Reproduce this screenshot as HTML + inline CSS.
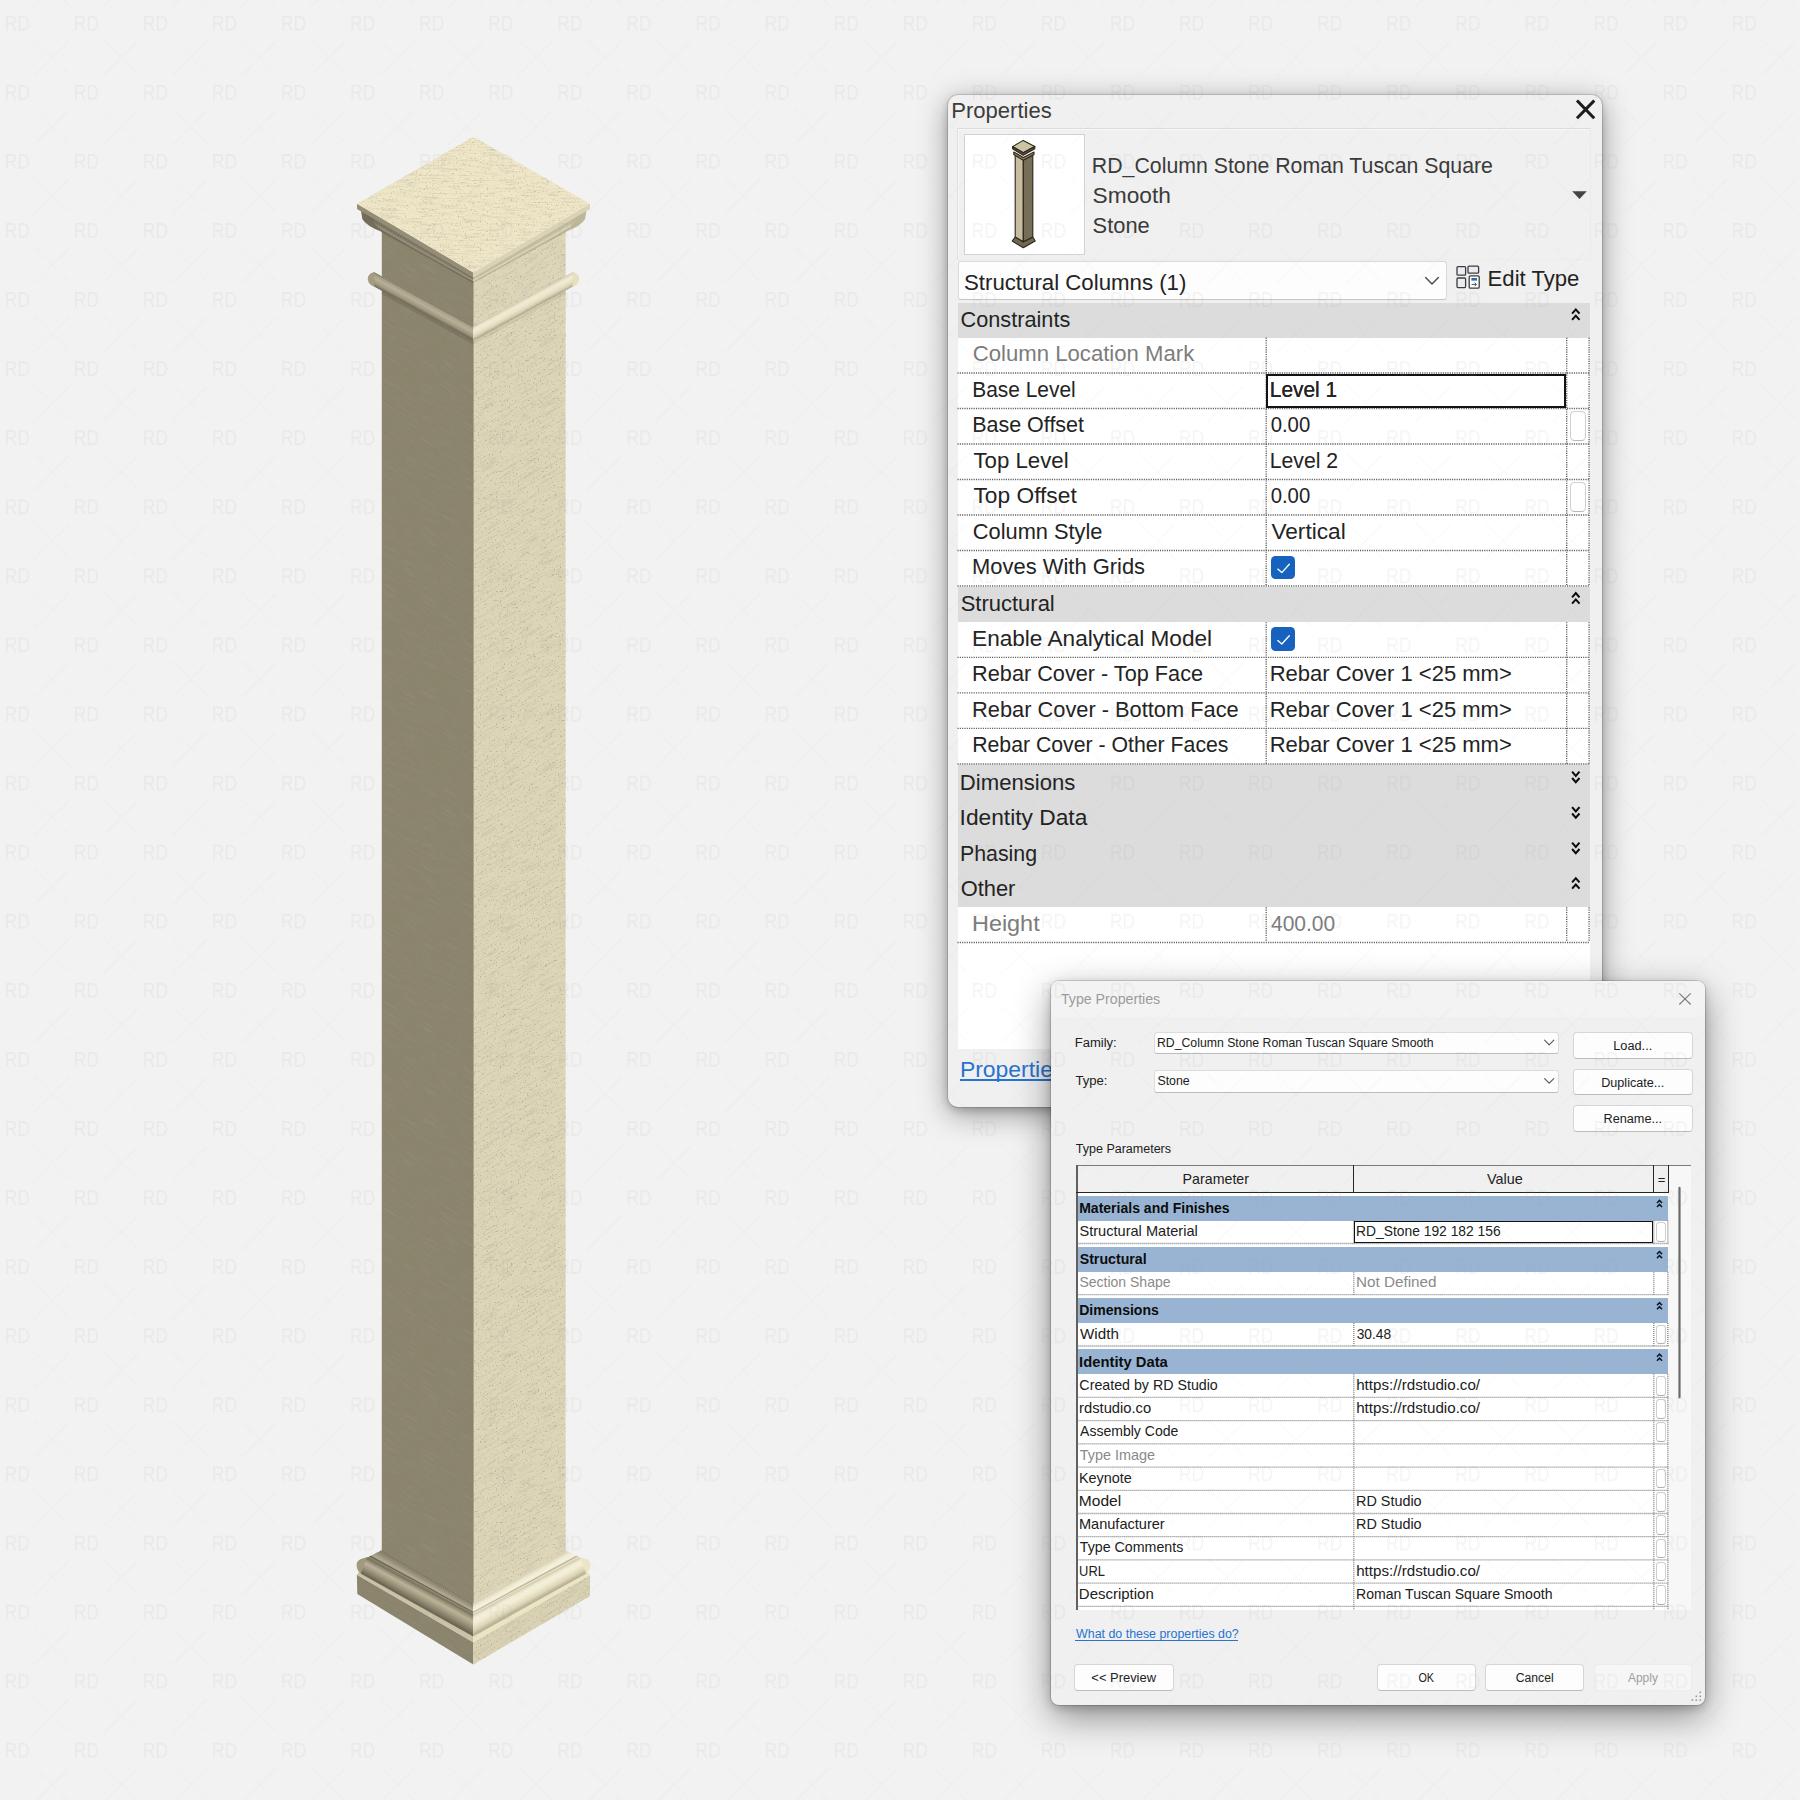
<!DOCTYPE html>
<html lang="en"><head><meta charset="utf-8"><title>RD_Column Stone Roman Tuscan Square Smooth</title>
<style>
html,body{margin:0;padding:0}
body{width:1800px;height:1800px;position:relative;overflow:hidden;background:#f2f2f2;font-family:"Liberation Sans",sans-serif;color:#1b1b1b}
.t{position:absolute;white-space:nowrap;line-height:1;transform-origin:0 0;display:block}
.abs{position:absolute}
svg{position:absolute;left:0;top:0;overflow:visible}
a.t{text-decoration:underline}

</style></head>
<body>
<svg width="1800" height="1800" viewBox="0 0 1800 1800" style="z-index:1">
<defs>
<filter id="grain" x="0" y="0" width="100%" height="100%"><feTurbulence type="fractalNoise" baseFrequency="0.05 0.6" numOctaves="3" seed="7" result="n"/><feColorMatrix in="n" type="matrix" values="0 0 0 0 0.40  0 0 0 0 0.37  0 0 0 0 0.29  0 0 0 -2.4 1.25"/></filter>
<filter id="spk" x="0" y="0" width="100%" height="100%"><feTurbulence type="fractalNoise" baseFrequency="0.55" numOctaves="2" seed="11" result="n"/><feColorMatrix in="n" type="matrix" values="0 0 0 0 0.3  0 0 0 0 0.26  0 0 0 0 0.17  0 0 0 -7 2.6"/></filter>
<clipPath id="cTop"><polygon points="473.3,136.7 590.0,203.8 473.3,272.4 357.0,203.8"/></clipPath>
<clipPath id="cRight"><polygon points="565.6,231.0 473.3,281.5 473.3,327.0 565.6,276.5"/><polygon points="565.6,288.0 473.3,338.0 473.3,1603.0 565.6,1550.7"/><polygon points="590.0,1575.1 473.3,1642.2 473.3,1664.5 590.0,1596.0"/></clipPath>
<clipPath id="cLeft"><polygon points="381.8,231.0 473.3,281.5 473.3,327.0 381.8,276.5"/><polygon points="381.8,288.0 473.3,338.0 473.3,1603.0 381.8,1550.5"/><polygon points="356.9,1574.7 473.3,1642.2 473.3,1664.5 357.3,1594.0"/></clipPath>
</defs>
<polygon points="356.9,1574.7 473.3,1642.2 473.3,1664.5 357.3,1594.0" fill="#8b846d"/>
<polygon points="590.0,1575.1 473.3,1642.2 473.3,1664.5 590.0,1596.0" fill="#dad2b4"/>
<polygon points="356.9,1574.7 473.3,1642.2 473.3,1635.5 360.0,1571.0" fill="#c9c2a5"/>
<polygon points="590.0,1575.1 473.3,1642.2 473.3,1635.5 587.0,1571.0" fill="#ece5c4"/>
<path d="M367.5,1557.6 Q355.6,1558.6 356.7,1566.2 Q357.5,1572.4 362,1574 L372,1574 L378,1560 Z" fill="#a09980"/>
<path d="M579.5,1557.6 Q591.4,1558.6 590.3,1566.2 Q589.5,1572.4 585,1574 L575,1574 L569,1560 Z" fill="#ebe4c5"/>
<polygon points="366.8,1557.3 473.3,1614.3 473.3,1617.3 366.0,1559.5" fill="#7c7661"/><polygon points="366.2,1558.9 473.3,1616.4 473.3,1619.4 365.4,1561.1" fill="#958e76"/><polygon points="365.7,1560.4 473.3,1618.5 473.3,1621.5 364.9,1562.7" fill="#a8a088"/><polygon points="365.1,1562.0 473.3,1620.7 473.3,1623.6 364.3,1564.2" fill="#bab399"/><polygon points="364.5,1563.6 473.3,1622.8 473.3,1625.8 363.7,1565.8" fill="#b0a98f"/><polygon points="364.0,1565.2 473.3,1624.9 473.3,1627.9 363.2,1567.4" fill="#a59e85"/><polygon points="363.4,1566.8 473.3,1627.1 473.3,1630.0 362.6,1569.0" fill="#99937a"/><polygon points="362.8,1568.3 473.3,1629.2 473.3,1632.2 362.0,1570.6" fill="#8c866f"/><polygon points="362.3,1569.9 473.3,1631.3 473.3,1634.3 361.5,1572.1" fill="#7f7964"/><polygon points="361.7,1571.5 473.3,1633.4 473.3,1636.4 360.9,1573.7" fill="#6e6857"/>
<polygon points="580.2,1557.3 473.3,1614.3 473.3,1617.3 581.0,1559.5" fill="#dbd4b9"/><polygon points="580.8,1558.9 473.3,1616.4 473.3,1619.4 581.6,1561.1" fill="#ece7d0"/><polygon points="581.3,1560.4 473.3,1618.5 473.3,1621.5 582.1,1562.7" fill="#f3efda"/><polygon points="581.9,1562.0 473.3,1620.7 473.3,1623.6 582.7,1564.2" fill="#f2eed7"/><polygon points="582.5,1563.6 473.3,1622.8 473.3,1625.8 583.3,1565.8" fill="#f1ecd4"/><polygon points="583.0,1565.2 473.3,1624.9 473.3,1627.9 583.8,1567.4" fill="#eae5cb"/><polygon points="583.6,1566.8 473.3,1627.1 473.3,1630.0 584.4,1569.0" fill="#e4ddc1"/><polygon points="584.2,1568.3 473.3,1629.2 473.3,1632.2 585.0,1570.6" fill="#ddd6b8"/><polygon points="584.7,1569.9 473.3,1631.3 473.3,1634.3 585.5,1572.1" fill="#ccc5a8"/><polygon points="585.3,1571.5 473.3,1633.4 473.3,1636.4 586.1,1573.7" fill="#bbb497"/>
<polygon points="382.1,1550.1 473.3,1602.8 473.3,1604.2 380.2,1551.1" fill="#7d7762"/><polygon points="380.8,1550.8 473.3,1603.8 473.3,1605.2 379.0,1551.7" fill="#847d67"/><polygon points="379.6,1551.4 473.3,1604.7 473.3,1606.2 377.7,1552.3" fill="#8a836d"/><polygon points="378.3,1552.0 473.3,1605.7 473.3,1607.2 376.5,1553.0" fill="#908a72"/><polygon points="377.1,1552.6 473.3,1606.7 473.3,1608.2 375.2,1553.6" fill="#979078"/><polygon points="375.8,1553.3 473.3,1607.7 473.3,1609.2 373.9,1554.2" fill="#9f987f"/><polygon points="374.6,1553.9 473.3,1608.7 473.3,1610.2 372.7,1554.8" fill="#a7a086"/><polygon points="373.3,1554.5 473.3,1609.7 473.3,1611.2 371.4,1555.5" fill="#aea78d"/><polygon points="372.0,1555.1 473.3,1610.7 473.3,1612.2 370.2,1556.1" fill="#aca58c"/><polygon points="370.8,1555.8 473.3,1611.7 473.3,1613.2 368.9,1556.7" fill="#656050"/><polygon points="369.5,1556.4 473.3,1612.7 473.3,1614.1 367.7,1557.3" fill="#8f8870"/><polygon points="368.3,1557.0 473.3,1613.7 473.3,1615.1 366.4,1558.0" fill="#817b65"/>
<polygon points="565.3,1550.4 473.3,1602.8 473.3,1604.2 567.1,1551.3" fill="#d5ceb0"/><polygon points="566.5,1551.0 473.3,1603.8 473.3,1605.2 568.3,1551.9" fill="#dcd5b9"/><polygon points="567.8,1551.6 473.3,1604.7 473.3,1606.2 569.6,1552.5" fill="#e3dcc1"/><polygon points="569.0,1552.2 473.3,1605.7 473.3,1607.2 570.8,1553.1" fill="#e9e4ca"/><polygon points="570.2,1552.8 473.3,1606.7 473.3,1608.2 572.0,1553.7" fill="#efead1"/><polygon points="571.4,1553.4 473.3,1607.7 473.3,1609.2 573.2,1554.3" fill="#f1edd6"/><polygon points="572.7,1554.0 473.3,1608.7 473.3,1610.2 574.5,1554.9" fill="#f4efdb"/><polygon points="573.9,1554.6 473.3,1609.7 473.3,1611.2 575.7,1555.5" fill="#f6f2e0"/><polygon points="575.1,1555.2 473.3,1610.7 473.3,1612.2 576.9,1556.1" fill="#ede9d4"/><polygon points="576.3,1555.8 473.3,1611.7 473.3,1613.2 578.1,1556.7" fill="#b9b295"/><polygon points="577.6,1556.4 473.3,1612.7 473.3,1614.1 579.4,1557.3" fill="#e8e2c8"/><polygon points="578.8,1557.0 473.3,1613.7 473.3,1615.1 580.6,1557.9" fill="#dad3b6"/>
<polygon points="381.8,288.0 473.3,338.0 473.3,1603.0 381.8,1550.5" fill="#8b846d"/>
<polygon points="565.6,288.0 473.3,338.0 473.3,1603.0 565.6,1550.7" fill="#ded6b9"/>
<polygon points="381.8,231.0 473.3,281.5 473.3,327.0 381.8,276.5" fill="#8b846d"/>
<polygon points="565.6,231.0 473.3,281.5 473.3,327.0 565.6,276.5" fill="#ded6b9"/>
<polygon points="374.0,272.1 473.3,325.9 473.3,328.0 374.0,274.1" fill="#88826c"/><polygon points="374.0,273.8 473.3,327.7 473.3,329.8 374.0,275.9" fill="#a59e85"/><polygon points="374.0,275.6 473.3,329.6 473.3,331.7 374.0,277.7" fill="#aea78d"/><polygon points="374.0,277.4 473.3,331.4 473.3,333.5 374.0,279.4" fill="#b4ad93"/><polygon points="374.0,279.1 473.3,333.2 473.3,335.4 374.0,281.2" fill="#aba48a"/><polygon points="374.0,280.9 473.3,335.1 473.3,337.2 374.0,283.0" fill="#a0997f"/><polygon points="374.0,282.7 473.3,337.0 473.3,339.1 374.0,284.8" fill="#8e8870"/><polygon points="374.0,284.5 473.3,338.8 473.3,340.9 374.0,286.5" fill="#76705c"/>
<polygon points="573.0,272.1 473.3,325.9 473.3,328.0 573.0,274.1" fill="#d8d0b4"/><polygon points="573.0,273.8 473.3,327.7 473.3,329.8 573.0,275.9" fill="#e8e3ca"/><polygon points="573.0,275.6 473.3,329.6 473.3,331.7 573.0,277.7" fill="#f0ebd3"/><polygon points="573.0,277.4 473.3,331.4 473.3,333.5 573.0,279.4" fill="#ede8ce"/><polygon points="573.0,279.1 473.3,333.2 473.3,335.4 573.0,281.2" fill="#eae4c8"/><polygon points="573.0,280.9 473.3,335.1 473.3,337.2 573.0,283.0" fill="#e0d9bc"/><polygon points="573.0,282.7 473.3,337.0 473.3,339.1 573.0,284.8" fill="#d6ceb0"/><polygon points="573.0,284.5 473.3,338.8 473.3,340.9 573.0,286.5" fill="#bab396"/>
<path d="M374.3,271.9 Q367.4,273.6 367.8,279.3 Q368.2,284.6 374.3,286.7 Z" fill="#a39c83"/>
<path d="M572.7,271.9 Q579.6,273.6 579.2,279.3 Q578.8,284.6 572.7,286.7 Z" fill="#e6dfc0"/>
<polygon points="381.8,290.6 473.3,340.8 473.3,344.5 381.8,294.3" fill="#000" opacity="0.10"/>
<polygon points="565.6,290.6 473.3,340.8 473.3,344.5 565.6,294.3" fill="#5a5034" opacity="0.10"/>
<path d="M358.5,208.6 L366,208.6 L382.8,232.2 Q366,226 362.3,219 L361,210.5 Z" fill="#726c59"/>
<path d="M588.5,208.6 L581,208.6 L564.6,232.2 Q581.4,226 585.1,219 L586.4,210.5 Z" fill="#bdb698"/>
<polygon points="363.1,211.2 473.3,277.1 473.3,277.9 365.7,214.0" fill="#7c7662"/><polygon points="365.0,213.2 473.3,277.6 473.3,278.4 367.5,216.1" fill="#6d6855"/><polygon points="366.8,215.3 473.3,278.2 473.3,279.0 369.4,218.1" fill="#6f6a57"/><polygon points="368.6,217.3 473.3,278.8 473.3,279.6 371.2,220.2" fill="#726c58"/><polygon points="370.5,219.4 473.3,279.3 473.3,280.1 373.0,222.2" fill="#746e5a"/><polygon points="372.3,221.4 473.3,279.9 473.3,280.7 374.8,224.2" fill="#837d67"/><polygon points="374.1,223.4 473.3,280.4 473.3,281.2 376.7,226.3" fill="#8c856e"/><polygon points="375.9,225.5 473.3,281.0 473.3,281.8 378.5,228.3" fill="#8e8871"/><polygon points="377.8,227.5 473.3,281.6 473.3,282.4 380.3,230.4" fill="#77715e"/><polygon points="379.6,229.6 473.3,282.1 473.3,282.9 382.2,232.4" fill="#6e6957"/>
<polygon points="584.3,211.2 473.3,277.1 473.3,277.9 581.7,214.0" fill="#cac2a4"/><polygon points="582.4,213.2 473.3,277.6 473.3,278.4 579.9,216.1" fill="#bbb496"/><polygon points="580.6,215.3 473.3,278.2 473.3,279.0 578.0,218.1" fill="#bdb698"/><polygon points="578.8,217.3 473.3,278.8 473.3,279.6 576.2,220.2" fill="#beb799"/><polygon points="576.9,219.4 473.3,279.3 473.3,280.1 574.4,222.2" fill="#c0b99b"/><polygon points="575.1,221.4 473.3,279.9 473.3,280.7 572.6,224.2" fill="#cdc6a8"/><polygon points="573.3,223.4 473.3,280.4 473.3,281.2 570.7,226.3" fill="#d4ceb0"/><polygon points="571.5,225.5 473.3,281.0 473.3,281.8 568.9,228.3" fill="#d8d0b2"/><polygon points="569.6,227.5 473.3,281.6 473.3,282.4 567.1,230.4" fill="#bfb89b"/><polygon points="567.8,229.6 473.3,282.1 473.3,282.9 565.2,232.4" fill="#bab396"/>
<polygon points="357.0,203.8 473.3,272.4 473.3,277.6 357.0,209.0" fill="#958e76"/>
<polygon points="590.0,203.8 473.3,272.4 473.3,277.6 590.0,209.0" fill="#dad2b4"/>
<polygon points="473.3,136.7 590.0,203.8 473.3,272.4 357.0,203.8" fill="#eee6c7"/>
<g clip-path="url(#cTop)"><rect x="350" y="130" width="250" height="150" filter="url(#grain)" opacity="0.30"/><rect x="350" y="130" width="250" height="150" filter="url(#spk)" opacity="0.35"/></g>
<g clip-path="url(#cRight)"><g transform="translate(473.3 0) skewY(-30.3) translate(-473.3 0)"><rect x="470" y="220" width="125" height="1500" filter="url(#grain)" opacity="0.36"/></g><rect x="470" y="220" width="125" height="1450" filter="url(#spk)" opacity="0.4"/></g>
<g clip-path="url(#cLeft)"><g transform="translate(473.3 0) skewY(30.3) translate(-473.3 0)"><rect x="352" y="220" width="125" height="1500" filter="url(#grain)" opacity="0.22"/></g><rect x="352" y="220" width="125" height="1450" filter="url(#spk)" opacity="0.35"/></g>
<path d="M473.3,340.8 L473.3,1603" stroke="#857e64" stroke-width="0.9" fill="none" opacity="0.75"/>
<path d="M473.3,281.5 L473.3,326" stroke="#857e64" stroke-width="0.9" fill="none" opacity="0.6"/>
</svg>
<div id="props" class="abs" style="left:947.5px;top:94.5px;width:654.5px;height:1012.2px;border-radius:10px;background:#f0f0f0;box-shadow:0 7px 30px rgba(0,0,0,.38),0 3px 9px rgba(0,0,0,.20),0 0 0 1px rgba(0,0,0,.12);z-index:2"></div>
<div class="abs" style="left:0;top:0;z-index:3">

<svg width="1800" height="1800" viewBox="0 0 1800 1800"><path d="M1578,101.6 L1593.2,117.2 M1593.2,101.6 L1578,117.2" stroke="#1c1c1c" stroke-width="3" stroke-linecap="square" fill="none"/></svg>
<div style="position:absolute;left:957.0px;top:128.0px;width:633.5px;height:131.5px;border:1px solid;border-color:#dcdcdc #eaeaea #ececec #e0e0e0;box-sizing:border-box;box-shadow:inset 1px 1px 0 #f8f8f8"></div>
<div style="position:absolute;left:963.5px;top:134.0px;width:121.1px;height:120.6px;background:#fff;border:1px solid #cfd3d8;box-sizing:border-box"></div>
<svg width="1800" height="1800" viewBox="0 0 1800 1800">
<g stroke="#2a2618" stroke-width="1.1" stroke-linejoin="round">
<polygon points="1015.2,237 1023.3,241.8 1032.8,237 1035.2,241 1023.3,247.8 1012.2,241" fill="#6f6750"/>
<polygon points="1015.2,155 1023.3,159.6 1023.3,241.8 1015.2,237" fill="#c8be9f"/>
<polygon points="1032.8,155 1023.3,159.6 1023.3,241.8 1032.8,237" fill="#776e57"/>
<polygon points="1013.8,152 1023.3,157.4 1034,152 1034,154.6 1023.3,160.2 1013.8,154.6" fill="#8b826a"/>
<polygon points="1023.2,140.4 1034.8,146.6 1023.2,152.8 1012.6,146.6" fill="#cdc3a5"/>
<polygon points="1012.6,146.6 1023.2,152.8 1034.8,146.6 1034.8,148.8 1023.2,155.2 1012.6,148.8" fill="#5d5642"/>
</g></svg>



<svg width="1800" height="1800" viewBox="0 0 1800 1800"><polygon points="1572.2,191.2 1586.8,191.2 1579.5,199" fill="#444"/></svg>
<div style="position:absolute;left:957.8px;top:260.5px;width:488.9px;height:39.5px;background:#fdfdfd;border:1px solid #dadada;border-bottom-color:#c4c4c4;border-radius:3px;box-sizing:border-box"></div>

<svg width="1800" height="1800" viewBox="0 0 1800 1800"><path d="M1425.6,277.6 L1432,284 L1438.4,277.6" stroke="#4a4a4a" stroke-width="1.4" fill="none" stroke-linecap="round" stroke-linejoin="round"/></svg>
<svg width="1800" height="1800" viewBox="0 0 1800 1800"><g fill="#e9edf3" stroke="#3c3c3c" stroke-width="1.3" stroke-linejoin="round">
<rect x="1457" y="266.6" width="8.6" height="8.6" rx="1"/><rect x="1468" y="266.2" width="10.6" height="7" rx="1"/>
<rect x="1457" y="278" width="8.6" height="9.6" rx="1"/><rect x="1469.2" y="275.8" width="10" height="12.4" rx="1.2" fill="#fff"/></g>
<rect x="1471.4" y="278" width="5.6" height="2.6" fill="#2f68b4"/><path d="M1471.6,284.4 h4.6 M1474.6,282.6 l1.8,1.8 l-1.8,1.8" stroke="#3c3c3c" stroke-width="0.9" fill="none"/></svg>

<div style="position:absolute;left:957.5px;top:303.0px;width:632.1px;height:746.2px;background:#fff"></div>
<div style="position:absolute;left:957.5px;top:303.0px;width:632.1px;height:34.8px;background:#dcdcdc"></div>






<div style="position:absolute;left:1569.6px;top:410.8px;width:16.6px;height:30.0px;background:#fff;border:1px solid #cfcfcf;border-bottom-color:#b9b9b9;border-radius:4.5px;box-sizing:border-box"></div>




<div style="position:absolute;left:1569.6px;top:481.8px;width:16.6px;height:30.0px;background:#fff;border:1px solid #cfcfcf;border-bottom-color:#b9b9b9;border-radius:4.5px;box-sizing:border-box"></div>



<div style="position:absolute;left:1271.2px;top:556.0px;width:24.0px;height:23.4px;background:#1762be;border-radius:4.5px"></div>
<div style="position:absolute;left:957.5px;top:586.7px;width:632.1px;height:35.5px;background:#dcdcdc"></div>


<div style="position:absolute;left:1271.2px;top:627.4px;width:24.0px;height:23.4px;background:#1762be;border-radius:4.5px"></div>






<div style="position:absolute;left:957.5px;top:764.3px;width:632.1px;height:143.0px;background:#dcdcdc"></div>






<svg width="1800" height="1800" viewBox="0 0 1800 1800"><g stroke="#5e5e5e" stroke-width="1.35" stroke-dasharray="1.15 1.15" fill="none"><line x1="957.5" y1="373.0" x2="1589.6" y2="373.0"/><line x1="957.5" y1="408.5" x2="1589.6" y2="408.5"/><line x1="957.5" y1="444.0" x2="1589.6" y2="444.0"/><line x1="957.5" y1="479.5" x2="1589.6" y2="479.5"/><line x1="957.5" y1="515.0" x2="1589.6" y2="515.0"/><line x1="957.5" y1="550.5" x2="1589.6" y2="550.5"/><line x1="957.5" y1="586.0" x2="1589.6" y2="586.0"/><line x1="1266.2" y1="337.8" x2="1266.2" y2="586.2"/><line x1="1566.7" y1="337.8" x2="1566.7" y2="586.2"/><line x1="1589.1" y1="337.8" x2="1589.1" y2="586.2"/><line x1="957.5" y1="657.4" x2="1589.6" y2="657.4"/><line x1="957.5" y1="692.9" x2="1589.6" y2="692.9"/><line x1="957.5" y1="728.4" x2="1589.6" y2="728.4"/><line x1="957.5" y1="763.9" x2="1589.6" y2="763.9"/><line x1="1266.2" y1="622.2" x2="1266.2" y2="764.0"/><line x1="1566.7" y1="622.2" x2="1566.7" y2="764.0"/><line x1="1589.1" y1="622.2" x2="1589.1" y2="764.0"/><line x1="957.5" y1="942.5" x2="1589.6" y2="942.5"/><line x1="1266.2" y1="907.3" x2="1266.2" y2="941.8"/><line x1="1566.7" y1="907.3" x2="1566.7" y2="941.8"/><line x1="1589.1" y1="907.3" x2="1589.1" y2="941.8"/></g><g stroke="#0a0a0a" stroke-width="2" fill="none" stroke-linecap="butt" stroke-linejoin="miter"><path d="M1572.1,313.6 L1575.8,309.4 L1579.5,313.6 M1572.1,319.9 L1575.8,315.7 L1579.5,319.9"/><path d="M1277.8,569.1 L1281.8,572.6 L1289.3,564.3" stroke="#fff" stroke-width="1.35" stroke-linecap="round" stroke-linejoin="round"/><path d="M1572.1,597.3 L1575.8,593.1 L1579.5,597.3 M1572.1,603.6 L1575.8,599.4 L1579.5,603.6"/><path d="M1277.8,640.5 L1281.8,644.0 L1289.3,635.7" stroke="#fff" stroke-width="1.35" stroke-linecap="round" stroke-linejoin="round"/><path d="M1572.1,771.7 L1575.8,775.9 L1579.5,771.7 M1572.1,778.0 L1575.8,782.2 L1579.5,778.0"/><path d="M1572.1,807.2 L1575.8,811.4 L1579.5,807.2 M1572.1,813.5 L1575.8,817.7 L1579.5,813.5"/><path d="M1572.1,842.7 L1575.8,846.9 L1579.5,842.7 M1572.1,849.0 L1575.8,853.2 L1579.5,849.0"/><path d="M1572.1,882.4 L1575.8,878.2 L1579.5,882.4 M1572.1,888.7 L1575.8,884.5 L1579.5,888.7"/></g></svg>
<div style="position:absolute;left:1266.4px;top:373.6px;width:300.0px;height:34.4px;border:2px solid #121212;box-sizing:border-box;background:#fff"></div>


<div style="position:absolute;left:960.2px;top:1079.4px;width:152.8px;height:1.5px;background:#2873cf"></div>
<svg width="1800" height="1800" viewBox="0 0 1800 1800"><g font-family="Liberation Sans, sans-serif" fill="#1b1b1b"><text x="951.19" y="118.3" font-size="21.5" textLength="100.61" lengthAdjust="spacingAndGlyphs" fill="#3c3c3c">Properties</text>
<text x="1091.86" y="173.0" font-size="21.5" textLength="401.08" lengthAdjust="spacingAndGlyphs" fill="#3a3a3a">RD_Column Stone Roman Tuscan Square</text>
<text x="1092.57" y="203.0" font-size="21.5" textLength="78.31" lengthAdjust="spacingAndGlyphs" fill="#3a3a3a">Smooth</text>
<text x="1092.61" y="233.0" font-size="21.5" textLength="57.17" lengthAdjust="spacingAndGlyphs" fill="#3a3a3a">Stone</text>
<text x="963.99" y="289.6" font-size="21.5" textLength="222.39" lengthAdjust="spacingAndGlyphs" fill="#232323">Structural Columns (1)</text>
<text x="1487.62" y="285.6" font-size="21.5" textLength="91.75" lengthAdjust="spacingAndGlyphs" fill="#232323">Edit Type</text>
<text x="960.60" y="327.3" font-size="21.5" textLength="109.68" lengthAdjust="spacingAndGlyphs" fill="#232323">Constraints</text>
<text x="972.78" y="361.2" font-size="21.5" textLength="221.49" lengthAdjust="spacingAndGlyphs" fill="#7c7c7c">Column Location Mark</text>
<text x="972.18" y="396.7" font-size="21.5" textLength="103.52" lengthAdjust="spacingAndGlyphs" fill="#232323">Base Level</text>
<text x="1269.79" y="396.7" font-size="21.5" textLength="67.33" lengthAdjust="spacingAndGlyphs" fill="#232323">Level 1</text>
<text x="972.14" y="432.2" font-size="21.5" textLength="111.91" lengthAdjust="spacingAndGlyphs" fill="#232323">Base Offset</text>
<text x="1270.71" y="432.2" font-size="21.5" textLength="39.48" lengthAdjust="spacingAndGlyphs" fill="#232323">0.00</text>
<text x="973.41" y="467.7" font-size="21.5" textLength="95.24" lengthAdjust="spacingAndGlyphs" fill="#232323">Top Level</text>
<text x="1269.76" y="467.7" font-size="21.5" textLength="68.41" lengthAdjust="spacingAndGlyphs" fill="#232323">Level 2</text>
<text x="973.40" y="503.2" font-size="21.5" textLength="103.36" lengthAdjust="spacingAndGlyphs" fill="#232323">Top Offset</text>
<text x="1270.71" y="503.2" font-size="21.5" textLength="39.48" lengthAdjust="spacingAndGlyphs" fill="#232323">0.00</text>
<text x="972.79" y="538.7" font-size="21.5" textLength="129.68" lengthAdjust="spacingAndGlyphs" fill="#232323">Column Style</text>
<text x="1271.40" y="538.7" font-size="21.5" textLength="74.29" lengthAdjust="spacingAndGlyphs" fill="#232323">Vertical</text>
<text x="972.10" y="574.2" font-size="21.5" textLength="172.99" lengthAdjust="spacingAndGlyphs" fill="#232323">Moves With Grids</text>
<text x="960.70" y="611.0" font-size="21.5" textLength="94.07" lengthAdjust="spacingAndGlyphs" fill="#232323">Structural</text>
<text x="972.05" y="645.6" font-size="21.5" textLength="240.05" lengthAdjust="spacingAndGlyphs" fill="#232323">Enable Analytical Model</text>
<text x="972.14" y="681.1" font-size="21.5" textLength="230.91" lengthAdjust="spacingAndGlyphs" fill="#232323">Rebar Cover - Top Face</text>
<text x="1269.70" y="681.1" font-size="21.5" textLength="242.08" lengthAdjust="spacingAndGlyphs" fill="#232323">Rebar Cover 1 &lt;25 mm&gt;</text>
<text x="972.11" y="716.6" font-size="21.5" textLength="266.56" lengthAdjust="spacingAndGlyphs" fill="#232323">Rebar Cover - Bottom Face</text>
<text x="1269.70" y="716.6" font-size="21.5" textLength="242.08" lengthAdjust="spacingAndGlyphs" fill="#232323">Rebar Cover 1 &lt;25 mm&gt;</text>
<text x="972.16" y="752.1" font-size="21.5" textLength="256.31" lengthAdjust="spacingAndGlyphs" fill="#232323">Rebar Cover - Other Faces</text>
<text x="1269.70" y="752.1" font-size="21.5" textLength="242.08" lengthAdjust="spacingAndGlyphs" fill="#232323">Rebar Cover 1 &lt;25 mm&gt;</text>
<text x="959.89" y="789.6" font-size="21.5" textLength="115.51" lengthAdjust="spacingAndGlyphs" fill="#232323">Dimensions</text>
<text x="959.60" y="825.1" font-size="21.5" textLength="127.70" lengthAdjust="spacingAndGlyphs" fill="#232323">Identity Data</text>
<text x="959.95" y="860.6" font-size="21.5" textLength="77.13" lengthAdjust="spacingAndGlyphs" fill="#232323">Phasing</text>
<text x="960.66" y="896.1" font-size="21.5" textLength="54.70" lengthAdjust="spacingAndGlyphs" fill="#232323">Other</text>
<text x="971.98" y="930.7" font-size="21.5" textLength="67.69" lengthAdjust="spacingAndGlyphs" fill="#7c7c7c">Height</text>
<text x="1271.02" y="930.7" font-size="21.5" textLength="64.20" lengthAdjust="spacingAndGlyphs" fill="#7c7c7c">400.00</text>
<text x="1269.79" y="396.7" font-size="21.5" textLength="67.33" lengthAdjust="spacingAndGlyphs" fill="#232323">Level 1</text>
<text x="959.92" y="1076.7" font-size="21.5" textLength="154.23" lengthAdjust="spacingAndGlyphs" fill="#2873cf">Properties help</text></g></svg>
</div>
<div id="typedlg" class="abs" style="left:1050.7px;top:980.8px;width:654.2px;height:723.9px;border-radius:8px;background:#f0f0f0;box-shadow:0 12px 36px rgba(0,0,0,.42),0 3px 10px rgba(0,0,0,.20),0 0 0 1px rgba(0,0,0,.14);z-index:4"></div>
<div class="abs" style="left:0;top:0;z-index:5">
<div style="position:absolute;left:1050.7px;top:980.8px;width:654.2px;height:36.7px;background:#f3f3f3;border-radius:8px 8px 0 0"></div>

<svg width="1800" height="1800" viewBox="0 0 1800 1800"><path d="M1679.3,993.3 L1690.7,1004.5 M1690.7,993.3 L1679.3,1004.5" stroke="#7a7a7a" stroke-width="1.1" fill="none"/></svg>


<div style="position:absolute;left:1153.8px;top:1031.5px;width:405.1px;height:22.0px;background:#fdfdfd;border:1px solid #dcdcdc;border-bottom-color:#bdbdbd;border-radius:3px;box-sizing:border-box"></div>
<div style="position:absolute;left:1153.8px;top:1069.5px;width:405.1px;height:23.0px;background:#fdfdfd;border:1px solid #dcdcdc;border-bottom-color:#bdbdbd;border-radius:3px;box-sizing:border-box"></div>


<svg width="1800" height="1800" viewBox="0 0 1800 1800"><g stroke="#555" stroke-width="1.1" fill="none" stroke-linecap="round" stroke-linejoin="round"><path d="M1544.6,1040.2 L1549.2,1044.8 L1553.8,1040.2"/><path d="M1544.6,1078.6 L1549.2,1083.2 L1553.8,1078.6"/></g></svg>
<div style="position:absolute;left:1572.8px;top:1031.8px;width:119.8px;height:26.8px;background:#fdfdfd;border:1px solid #d6d6d6;border-bottom-color:#bcbcbc;border-radius:4px;box-sizing:border-box"></div>

<div style="position:absolute;left:1572.8px;top:1068.6px;width:119.8px;height:26.6px;background:#fdfdfd;border:1px solid #d6d6d6;border-bottom-color:#bcbcbc;border-radius:4px;box-sizing:border-box"></div>

<div style="position:absolute;left:1572.8px;top:1105.2px;width:119.8px;height:26.6px;background:#fdfdfd;border:1px solid #d6d6d6;border-bottom-color:#bcbcbc;border-radius:4px;box-sizing:border-box"></div>


<div style="position:absolute;left:1076.2px;top:1165.0px;width:614.5px;height:445.0px;background:#f7f7f7"></div>
<div style="position:absolute;left:1076.2px;top:1165.0px;width:592.0px;height:445.0px;background:#fff"></div>
<div style="position:absolute;left:1076.2px;top:1165.0px;width:592.0px;height:27.6px;background:#f0f0f0"></div>
<div style="position:absolute;left:1076.2px;top:1165.0px;width:614.5px;height:1.2px;background:#7a7a7a"></div>
<div style="position:absolute;left:1076.2px;top:1165.0px;width:1.7px;height:445.0px;background:#606060"></div>
<div style="position:absolute;left:1076.2px;top:1191.6px;width:592.0px;height:1.1px;background:#262626"></div>
<div style="position:absolute;left:1353.2px;top:1165.0px;width:1.2px;height:27.7px;background:#262626"></div>
<div style="position:absolute;left:1653.2px;top:1165.0px;width:1.2px;height:27.7px;background:#262626"></div>
<div style="position:absolute;left:1667.6px;top:1165.0px;width:1.2px;height:27.7px;background:#262626"></div>



<div style="position:absolute;left:1077.6px;top:1195.6px;width:590.6px;height:25.0px;background:#99b4d3"></div>


<div style="position:absolute;left:1655.6px;top:1222.1px;width:10.6px;height:19.6px;background:#fff;border:1px solid #cdcdcd;border-bottom-color:#b0b0b0;border-radius:3.5px;box-sizing:border-box"></div>
<div style="position:absolute;left:1077.6px;top:1246.7px;width:590.6px;height:25.0px;background:#99b4d3"></div>



<div style="position:absolute;left:1077.6px;top:1297.9px;width:590.6px;height:25.0px;background:#99b4d3"></div>



<div style="position:absolute;left:1655.6px;top:1324.6px;width:10.6px;height:19.6px;background:#fff;border:1px solid #cdcdcd;border-bottom-color:#b0b0b0;border-radius:3.5px;box-sizing:border-box"></div>
<div style="position:absolute;left:1077.6px;top:1349.3px;width:590.6px;height:25.0px;background:#99b4d3"></div>



<div style="position:absolute;left:1655.6px;top:1376.0px;width:10.6px;height:19.6px;background:#fff;border:1px solid #cdcdcd;border-bottom-color:#b0b0b0;border-radius:3.5px;box-sizing:border-box"></div>


<div style="position:absolute;left:1655.6px;top:1399.2px;width:10.6px;height:19.6px;background:#fff;border:1px solid #cdcdcd;border-bottom-color:#b0b0b0;border-radius:3.5px;box-sizing:border-box"></div>

<div style="position:absolute;left:1655.6px;top:1422.4px;width:10.6px;height:19.6px;background:#fff;border:1px solid #cdcdcd;border-bottom-color:#b0b0b0;border-radius:3.5px;box-sizing:border-box"></div>


<div style="position:absolute;left:1655.6px;top:1468.9px;width:10.6px;height:19.6px;background:#fff;border:1px solid #cdcdcd;border-bottom-color:#b0b0b0;border-radius:3.5px;box-sizing:border-box"></div>


<div style="position:absolute;left:1655.6px;top:1492.1px;width:10.6px;height:19.6px;background:#fff;border:1px solid #cdcdcd;border-bottom-color:#b0b0b0;border-radius:3.5px;box-sizing:border-box"></div>


<div style="position:absolute;left:1655.6px;top:1515.3px;width:10.6px;height:19.6px;background:#fff;border:1px solid #cdcdcd;border-bottom-color:#b0b0b0;border-radius:3.5px;box-sizing:border-box"></div>

<div style="position:absolute;left:1655.6px;top:1538.5px;width:10.6px;height:19.6px;background:#fff;border:1px solid #cdcdcd;border-bottom-color:#b0b0b0;border-radius:3.5px;box-sizing:border-box"></div>


<div style="position:absolute;left:1655.6px;top:1561.8px;width:10.6px;height:19.6px;background:#fff;border:1px solid #cdcdcd;border-bottom-color:#b0b0b0;border-radius:3.5px;box-sizing:border-box"></div>


<div style="position:absolute;left:1655.6px;top:1585.0px;width:10.6px;height:19.6px;background:#fff;border:1px solid #cdcdcd;border-bottom-color:#b0b0b0;border-radius:3.5px;box-sizing:border-box"></div>
<svg width="1800" height="1800" viewBox="0 0 1800 1800"><g stroke="#808080" stroke-width="1.3" stroke-dasharray="1 1" fill="none"><line x1="1077.6" y1="1243.5" x2="1668.2" y2="1243.5"/><line x1="1077.6" y1="1294.7" x2="1668.2" y2="1294.7"/><line x1="1077.6" y1="1346.0" x2="1668.2" y2="1346.0"/><line x1="1077.6" y1="1397.4" x2="1668.2" y2="1397.4"/><line x1="1077.6" y1="1420.6" x2="1668.2" y2="1420.6"/><line x1="1077.6" y1="1443.8" x2="1668.2" y2="1443.8"/><line x1="1077.6" y1="1467.1" x2="1668.2" y2="1467.1"/><line x1="1077.6" y1="1490.3" x2="1668.2" y2="1490.3"/><line x1="1077.6" y1="1513.5" x2="1668.2" y2="1513.5"/><line x1="1077.6" y1="1536.7" x2="1668.2" y2="1536.7"/><line x1="1077.6" y1="1559.9" x2="1668.2" y2="1559.9"/><line x1="1077.6" y1="1583.2" x2="1668.2" y2="1583.2"/><line x1="1077.6" y1="1606.4" x2="1668.2" y2="1606.4"/><line x1="1353.8" y1="1220.6" x2="1353.8" y2="1243.5"/><line x1="1653.8" y1="1220.6" x2="1653.8" y2="1243.5"/><line x1="1667.8" y1="1220.6" x2="1667.8" y2="1243.5"/><line x1="1353.8" y1="1271.7" x2="1353.8" y2="1294.7"/><line x1="1653.8" y1="1271.7" x2="1653.8" y2="1294.7"/><line x1="1667.8" y1="1271.7" x2="1667.8" y2="1294.7"/><line x1="1353.8" y1="1322.9" x2="1353.8" y2="1346.0"/><line x1="1653.8" y1="1322.9" x2="1653.8" y2="1346.0"/><line x1="1667.8" y1="1322.9" x2="1667.8" y2="1346.0"/><line x1="1353.8" y1="1374.3" x2="1353.8" y2="1610.0"/><line x1="1653.8" y1="1374.3" x2="1653.8" y2="1610.0"/><line x1="1667.8" y1="1374.3" x2="1667.8" y2="1610.0"/></g><g stroke="#0b1626" stroke-width="1.55" fill="none"><path d="M1657.0,1203.0 L1659.5,1200.4 L1662.0,1203.0 M1657.0,1207.0 L1659.5,1204.4 L1662.0,1207.0"/><path d="M1657.0,1254.1 L1659.5,1251.5 L1662.0,1254.1 M1657.0,1258.1 L1659.5,1255.5 L1662.0,1258.1"/><path d="M1657.0,1305.3 L1659.5,1302.7 L1662.0,1305.3 M1657.0,1309.3 L1659.5,1306.7 L1662.0,1309.3"/><path d="M1657.0,1356.7 L1659.5,1354.1 L1662.0,1356.7 M1657.0,1360.7 L1659.5,1358.1 L1662.0,1360.7"/></g><rect x="1678.4" y="1186.8" width="2.2" height="211.6" rx="1.1" fill="#6a6a6a"/></svg>
<div style="position:absolute;left:1354.2px;top:1221.0px;width:299.0px;height:22.4px;border:1.3px solid #111;box-sizing:border-box;background:#fff"></div>


<div style="position:absolute;left:1075.3px;top:1639.7px;width:162.7px;height:1.0px;background:#2873cf"></div>
<div style="position:absolute;left:1074.4px;top:1664.3px;width:99.2px;height:26.5px;background:#fdfdfd;border:1px solid #d6d6d6;border-bottom-color:#bcbcbc;border-radius:4px;box-sizing:border-box"></div>

<div style="position:absolute;left:1376.8px;top:1664.3px;width:99.2px;height:26.5px;background:#fdfdfd;border:1px solid #d6d6d6;border-bottom-color:#bcbcbc;border-radius:4px;box-sizing:border-box"></div>

<div style="position:absolute;left:1485.0px;top:1664.3px;width:99.2px;height:26.5px;background:#fdfdfd;border:1px solid #d6d6d6;border-bottom-color:#bcbcbc;border-radius:4px;box-sizing:border-box"></div>

<div style="position:absolute;left:1593.6px;top:1664.3px;width:98.6px;height:26.5px;background:#f6f6f6;border:1px solid #ececec;border-radius:4px;box-sizing:border-box"></div>

<svg width="1800" height="1800" viewBox="0 0 1800 1800"><g fill="#9a9a9a"><rect x="1699.5" y="1691.5" width="1.6" height="1.6"/><rect x="1699.5" y="1695.5" width="1.6" height="1.6"/><rect x="1695.5" y="1695.5" width="1.6" height="1.6"/><rect x="1699.5" y="1699.3" width="1.6" height="1.6"/><rect x="1695.5" y="1699.3" width="1.6" height="1.6"/><rect x="1691.5" y="1699.3" width="1.6" height="1.6"/></g></svg>
<svg width="1800" height="1800" viewBox="0 0 1800 1800"><g font-family="Liberation Sans, sans-serif" fill="#1b1b1b"><text x="1060.98" y="1004.2" font-size="13.8" textLength="99.22" lengthAdjust="spacingAndGlyphs" fill="#9b9b9b">Type Properties</text>
<text x="1074.73" y="1046.7" font-size="12.3" textLength="41.96" lengthAdjust="spacingAndGlyphs" fill="#202020">Family:</text>
<text x="1075.51" y="1085.3" font-size="12.3" textLength="31.95" lengthAdjust="spacingAndGlyphs" fill="#202020">Type:</text>
<text x="1157.00" y="1046.7" font-size="12.3" textLength="276.50" lengthAdjust="spacingAndGlyphs" fill="#202020">RD_Column Stone Roman Tuscan Square Smooth</text>
<text x="1157.44" y="1085.3" font-size="12.3" textLength="32.31" lengthAdjust="spacingAndGlyphs" fill="#202020">Stone</text>
<text x="1632.76" y="1049.6" font-size="12.3" textLength="38.91" lengthAdjust="spacingAndGlyphs" fill="#202020" text-anchor="middle">Load...</text>
<text x="1632.76" y="1086.7" font-size="12.3" textLength="63.19" lengthAdjust="spacingAndGlyphs" fill="#202020" text-anchor="middle">Duplicate...</text>
<text x="1632.76" y="1123.3" font-size="12.3" textLength="58.60" lengthAdjust="spacingAndGlyphs" fill="#202020" text-anchor="middle">Rename...</text>
<text x="1075.82" y="1153.3" font-size="12.3" textLength="95.23" lengthAdjust="spacingAndGlyphs" fill="#202020">Type Parameters</text>
<text x="1215.83" y="1184.0" font-size="13.9" textLength="66.40" lengthAdjust="spacingAndGlyphs" fill="#202020" text-anchor="middle">Parameter</text>
<text x="1504.88" y="1184.0" font-size="13.9" textLength="35.78" lengthAdjust="spacingAndGlyphs" fill="#202020" text-anchor="middle">Value</text>
<text x="1661.60" y="1184.2" font-size="13" fill="#202020" text-anchor="middle">=</text>
<text x="1079.16" y="1212.9" font-size="13.9" textLength="150.41" lengthAdjust="spacingAndGlyphs" fill="#0c0c0c" font-weight="bold">Materials and Finishes</text>
<text x="1079.44" y="1236.0" font-size="13.9" textLength="118.34" lengthAdjust="spacingAndGlyphs" fill="#202020">Structural Material</text>
<text x="1079.69" y="1264.0" font-size="13.9" textLength="67.01" lengthAdjust="spacingAndGlyphs" fill="#0c0c0c" font-weight="bold">Structural</text>
<text x="1079.46" y="1287.2" font-size="13.9" textLength="91.06" lengthAdjust="spacingAndGlyphs" fill="#8a8a8a">Section Shape</text>
<text x="1355.95" y="1287.2" font-size="13.9" textLength="80.64" lengthAdjust="spacingAndGlyphs" fill="#8a8a8a">Not Defined</text>
<text x="1079.16" y="1315.2" font-size="13.9" textLength="79.72" lengthAdjust="spacingAndGlyphs" fill="#0c0c0c" font-weight="bold">Dimensions</text>
<text x="1080.03" y="1338.5" font-size="13.9" textLength="38.85" lengthAdjust="spacingAndGlyphs" fill="#202020">Width</text>
<text x="1356.68" y="1338.5" font-size="13.9" textLength="34.42" lengthAdjust="spacingAndGlyphs" fill="#202020">30.48</text>
<text x="1079.11" y="1366.6" font-size="13.9" textLength="88.69" lengthAdjust="spacingAndGlyphs" fill="#0c0c0c" font-weight="bold">Identity Data</text>
<text x="1079.38" y="1389.9" font-size="13.9" textLength="138.42" lengthAdjust="spacingAndGlyphs" fill="#202020">Created by RD Studio</text>
<text x="1356.15" y="1389.9" font-size="13.9" textLength="123.95" lengthAdjust="spacingAndGlyphs" fill="#202020">https://rdstudio.co/</text>
<text x="1079.12" y="1413.1" font-size="13.9" textLength="72.00" lengthAdjust="spacingAndGlyphs" fill="#202020">rdstudio.co</text>
<text x="1356.15" y="1413.1" font-size="13.9" textLength="123.95" lengthAdjust="spacingAndGlyphs" fill="#202020">https://rdstudio.co/</text>
<text x="1080.07" y="1436.3" font-size="13.9" textLength="98.25" lengthAdjust="spacingAndGlyphs" fill="#202020">Assembly Code</text>
<text x="1079.78" y="1459.6" font-size="13.9" textLength="75.35" lengthAdjust="spacingAndGlyphs" fill="#8a8a8a">Type Image</text>
<text x="1078.92" y="1482.8" font-size="13.9" textLength="52.92" lengthAdjust="spacingAndGlyphs" fill="#202020">Keynote</text>
<text x="1078.83" y="1506.0" font-size="13.9" textLength="42.31" lengthAdjust="spacingAndGlyphs" fill="#202020">Model</text>
<text x="1356.02" y="1506.0" font-size="13.9" textLength="65.58" lengthAdjust="spacingAndGlyphs" fill="#202020">RD Studio</text>
<text x="1078.90" y="1529.2" font-size="13.9" textLength="85.84" lengthAdjust="spacingAndGlyphs" fill="#202020">Manufacturer</text>
<text x="1356.02" y="1529.2" font-size="13.9" textLength="65.58" lengthAdjust="spacingAndGlyphs" fill="#202020">RD Studio</text>
<text x="1079.78" y="1552.4" font-size="13.9" textLength="103.53" lengthAdjust="spacingAndGlyphs" fill="#202020">Type Comments</text>
<text x="1079.10" y="1575.7" font-size="13.9" textLength="25.82" lengthAdjust="spacingAndGlyphs" fill="#202020">URL</text>
<text x="1356.15" y="1575.7" font-size="13.9" textLength="123.95" lengthAdjust="spacingAndGlyphs" fill="#202020">https://rdstudio.co/</text>
<text x="1078.87" y="1598.9" font-size="13.9" textLength="74.90" lengthAdjust="spacingAndGlyphs" fill="#202020">Description</text>
<text x="1356.05" y="1598.9" font-size="13.9" textLength="196.46" lengthAdjust="spacingAndGlyphs" fill="#202020">Roman Tuscan Square Smooth</text>
<text x="1356.06" y="1236.0" font-size="13.9" textLength="144.64" lengthAdjust="spacingAndGlyphs" fill="#202020">RD_Stone 192 182 156</text>
<text x="1076.05" y="1638.2" font-size="12.3" textLength="162.71" lengthAdjust="spacingAndGlyphs" fill="#2873cf">What do these properties do?</text>
<text x="1123.67" y="1682.2" font-size="12.3" textLength="64.61" lengthAdjust="spacingAndGlyphs" fill="#202020" text-anchor="middle">&lt;&lt; Preview</text>
<text x="1426.20" y="1682.2" font-size="12.3" textLength="15.63" lengthAdjust="spacingAndGlyphs" fill="#202020" text-anchor="middle">OK</text>
<text x="1534.70" y="1682.2" font-size="12.3" textLength="37.83" lengthAdjust="spacingAndGlyphs" fill="#202020" text-anchor="middle">Cancel</text>
<text x="1642.90" y="1682.2" font-size="12.3" textLength="30.05" lengthAdjust="spacingAndGlyphs" fill="#a0a0a0" text-anchor="middle">Apply</text></g></svg>
</div>
<svg width="1800" height="1800" viewBox="0 0 1800 1800" style="z-index:9;pointer-events:none">
<defs><pattern id="wm" x="0" y="0" width="69.0800" height="69.0800" patternUnits="userSpaceOnUse"><text x="4.6" y="30.8" font-family="Liberation Sans, sans-serif" font-size="21" textLength="25.2" lengthAdjust="spacingAndGlyphs" fill="#8c8c8c" fill-opacity="0.095">RD</text><path d="M33.5,38.5 L71.5,76.5 M71.5,38.5 L33.5,76.5 M-35.7,38.5 L2.3,76.5 M33.5,-30.7 L71.5,7.3 M71.5,-30.7 L33.5,7.3" stroke="#9a9a9a" stroke-opacity="0.055" stroke-width="1" fill="none"/></pattern></defs>
<rect x="0" y="0" width="1800" height="1800" fill="url(#wm)"/>
</svg>
</body></html>
